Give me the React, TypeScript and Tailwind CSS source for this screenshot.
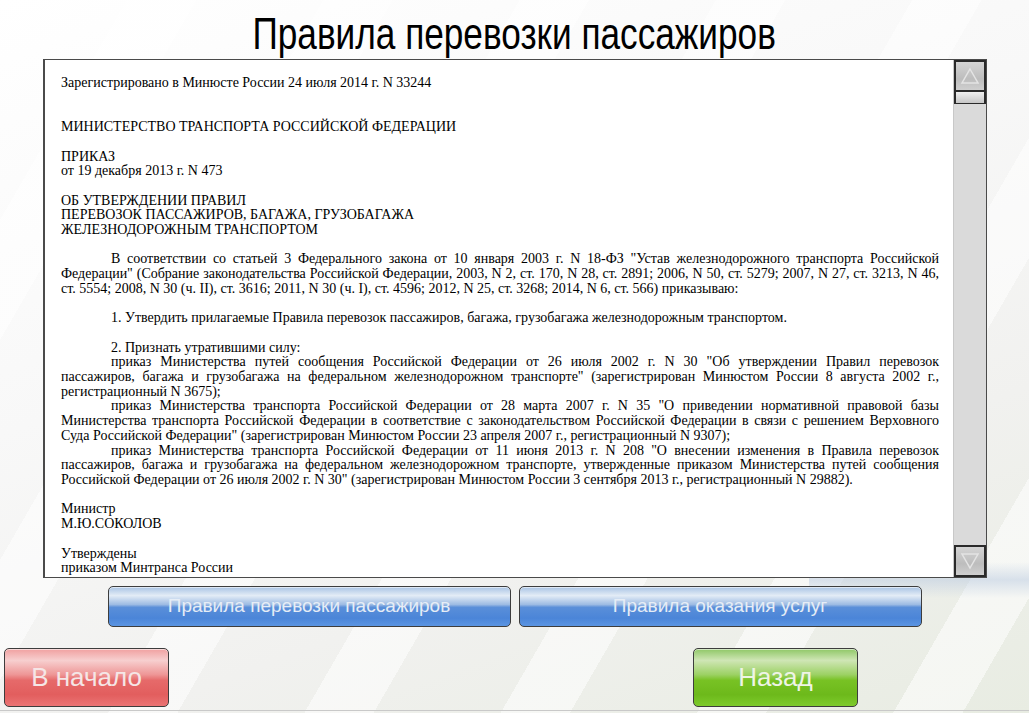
import React from "react";

const serif = { fontFamily: "'Liberation Serif', 'Times New Roman', serif" };
const sans = { fontFamily: "'Liberation Sans', Arial, sans-serif" };

// paragraph laid out line by line, so the wraps follow the source document
function Para({ lines }: { lines: string[] }) {
  return (
    <div>
      {lines.map((l, i) => (
        <p
          key={i}
          className={`${i === 0 ? "pl-[50px]" : ""} ${i < lines.length - 1 ? "text-justify [text-align-last:justify]" : ""} whitespace-nowrap`}
        >
          {l}
        </p>
      ))}
    </div>
  );
}

function GlossButton({ label, tone, className }: { label: string; tone: "blue" | "red" | "green"; className?: string }) {
  const skin =
    tone === "blue"
      ? "bg-[linear-gradient(to_bottom,#a8c3e4_0%,#e3ecf6_22%,#9dbbe3_45%,#5a8fd9_52%,#4b85d8_80%,#5b95e2_100%)] text-[#e6edf6]"
      : tone === "red"
        ? "bg-[linear-gradient(to_bottom,#f0a0a0_0%,#f7cfcf_20%,#ee9696_45%,#e66a6a_55%,#e25e5e_80%,#eb7474_100%)] text-[#f5e6e6]"
        : "bg-[linear-gradient(to_bottom,#8fc766_0%,#cfe6b5_20%,#9cd164_45%,#78c224_55%,#6db91b_80%,#7ecb2c_100%)] text-[#eef4e6]";
  return (
    <button
      className={`flex items-center justify-center whitespace-nowrap rounded-[5px] border border-[#3d3d3d] shadow-[inset_0_1px_0_rgba(255,255,255,0.6)] ${skin} ${className ?? ""}`}
      style={sans}
    >
      {label}
    </button>
  );
}

function ScrollArrow({ up }: { up?: boolean }) {
  return (
    <div className="h-[32px] border-2 border-[#2a2a2a] bg-[linear-gradient(to_bottom,#d4d4d4,#bdbdbd_60%,#cfcfcf)] flex items-center justify-center">
      <svg width="20" height="18" viewBox="0 0 20 18">
        {up ? (
          <path d="M10 2 L18 16 L2 16 Z" fill="none" stroke="#e4e4e4" strokeWidth="1.5" />
        ) : (
          <path d="M2 2 L18 2 L10 16 Z" fill="none" stroke="#e4e4e4" strokeWidth="1.5" />
        )}
      </svg>
    </div>
  );
}

export default function App() {
  return (
    <div className="w-[1029px] h-[713px] overflow-hidden relative bg-[linear-gradient(160deg,#ffffff_0%,#f8f8f8_40%,#f1f1ef_70%,#e8ece2_100%)]">
      {/* faint diagonal stripes */}
      <div className="absolute inset-0 pointer-events-none bg-[repeating-linear-gradient(120deg,transparent_0px,transparent_110px,rgba(255,255,255,0.55)_110px,rgba(255,255,255,0.55)_170px)]" />
      <div className="absolute right-0 top-[562px] w-[220px] h-[36px] bg-[linear-gradient(to_bottom,transparent,rgba(190,205,225,0.55),transparent)] pointer-events-none" />
      <div className="absolute left-0 right-0 bottom-[2px] h-px bg-[#c9c9c9]" />

      <div className="relative flex flex-col items-center">
        <div className="h-[59px] flex items-center justify-center pt-[8px]">
          <h1 className="text-[44px] leading-none text-black scale-x-[0.8] whitespace-nowrap" style={sans}>
            Правила перевозки пассажиров
          </h1>
        </div>

        <div className="ml-[43px] self-start w-[944px] h-[519px] flex border border-[#4a4a4a] border-l-2 bg-white">
          <div className="flex-1 overflow-hidden pl-[16px] pr-[14px] pt-[16px] text-[14px] leading-[14.7px] text-black" style={serif}>
            <p>Зарегистрировано в Минюсте России 24 июля 2014 г. N 33244</p>
            <br />
            <br />
            <p>МИНИСТЕРСТВО ТРАНСПОРТА РОССИЙСКОЙ ФЕДЕРАЦИИ</p>
            <br />
            <p>ПРИКАЗ</p>
            <p>от 19 декабря 2013 г. N 473</p>
            <br />
            <p>ОБ УТВЕРЖДЕНИИ ПРАВИЛ</p>
            <p>ПЕРЕВОЗОК ПАССАЖИРОВ, БАГАЖА, ГРУЗОБАГАЖА</p>
            <p>ЖЕЛЕЗНОДОРОЖНЫМ ТРАНСПОРТОМ</p>
            <br />
            <Para
              lines={[
                'В соответствии со статьей 3 Федерального закона от 10 января 2003 г. N 18-ФЗ "Устав железнодорожного транспорта Российской',
                'Федерации" (Собрание законодательства Российской Федерации, 2003, N 2, ст. 170, N 28, ст. 2891; 2006, N 50, ст. 5279; 2007, N 27, ст. 3213, N 46,',
                "ст. 5554; 2008, N 30 (ч. II), ст. 3616; 2011, N 30 (ч. I), ст. 4596; 2012, N 25, ст. 3268; 2014, N 6, ст. 566) приказываю:",
              ]}
            />
            <br />
            <Para lines={["1. Утвердить прилагаемые Правила перевозок пассажиров, багажа, грузобагажа железнодорожным транспортом."]} />
            <br />
            <Para lines={["2. Признать утратившими силу:"]} />
            <Para
              lines={[
                'приказ Министерства путей сообщения Российской Федерации от 26 июля 2002 г. N 30 "Об утверждении Правил перевозок',
                'пассажиров, багажа и грузобагажа на федеральном железнодорожном транспорте" (зарегистрирован Минюстом России 8 августа 2002 г.,',
                "регистрационный N 3675);",
              ]}
            />
            <Para
              lines={[
                'приказ Министерства транспорта Российской Федерации от 28 марта 2007 г. N 35 "О приведении нормативной правовой базы',
                "Министерства транспорта Российской Федерации в соответствие с законодательством Российской Федерации в связи с решением Верховного",
                'Суда Российской Федерации" (зарегистрирован Минюстом России 23 апреля 2007 г., регистрационный N 9307);',
              ]}
            />
            <Para
              lines={[
                'приказ Министерства транспорта Российской Федерации от 11 июня 2013 г. N 208 "О внесении изменения в Правила перевозок',
                "пассажиров, багажа и грузобагажа на федеральном железнодорожном транспорте, утвержденные приказом Министерства путей сообщения",
                'Российской Федерации от 26 июля 2002 г. N 30" (зарегистрирован Минюстом России 3 сентября 2013 г., регистрационный N 29882).',
              ]}
            />
            <br />
            <p>Министр</p>
            <p>М.Ю.СОКОЛОВ</p>
            <br />
            <p>Утверждены</p>
            <p>приказом Минтранса России</p>
          </div>

          {/* scrollbar */}
          <div className="w-[33px] flex flex-col bg-[#dadada] border-l border-[#c8c8c8]">
            <ScrollArrow up />
            <div className="h-[12px] border-x-2 border-b border-[#2a2a2a] bg-[linear-gradient(to_bottom,#f0f0f0,#c6c6c6)]" />
            <div className="flex-1" />
            <ScrollArrow />
          </div>
        </div>

        <div className="mt-[8px] flex gap-[8px]">
          <GlossButton label="Правила перевозки пассажиров" tone="blue" className="w-[403px] h-[41px] text-[19px]" />
          <GlossButton label="Правила оказания услуг" tone="blue" className="w-[403px] h-[41px] text-[19px]" />
        </div>

        <div className="self-stretch mt-[21px] flex px-[4px]">
          <GlossButton label="В начало" tone="red" className="w-[165px] h-[59px] text-[26px]" />
          <div className="flex-1" />
          <GlossButton label="Назад" tone="green" className="w-[165px] h-[59px] text-[26px] mr-[167px]" />
        </div>
      </div>
    </div>
  );
}
